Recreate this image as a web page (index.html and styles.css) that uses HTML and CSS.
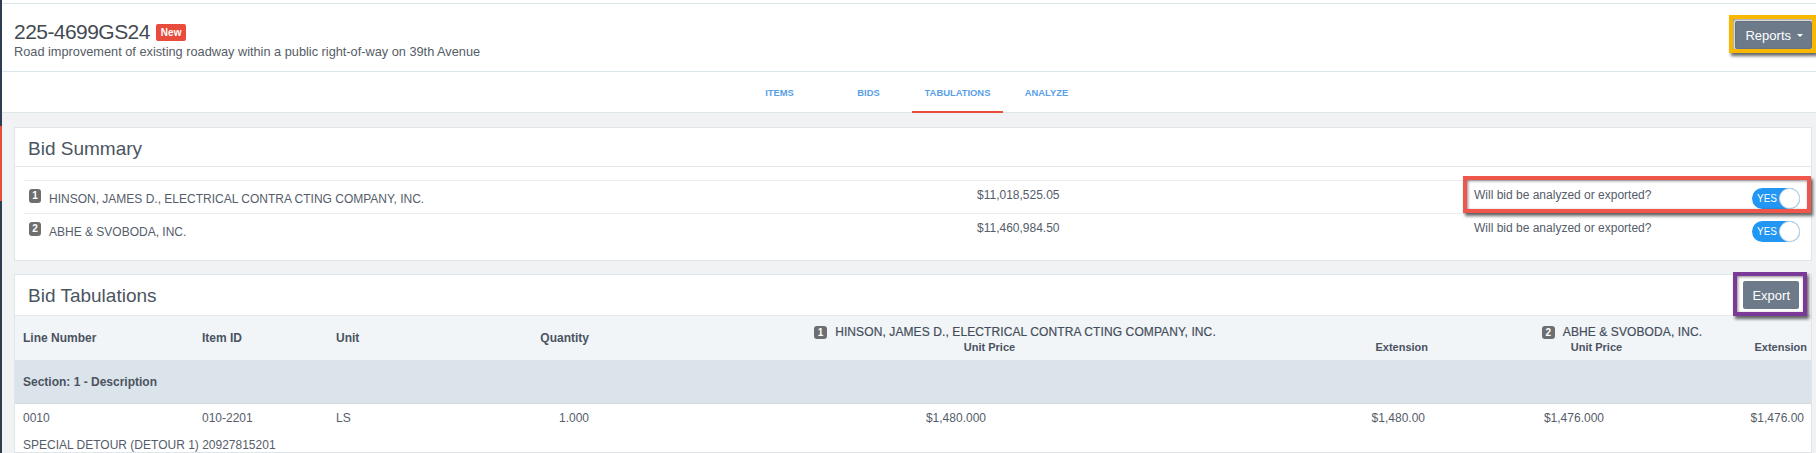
FILE: index.html
```html
<!DOCTYPE html>
<html lang="en">
<head>
<meta charset="utf-8">
<title>225-4699GS24 – Tabulations</title>
<link rel="stylesheet" href="styles.css">
</head>
<body>
<div class="app">
  <aside class="rail"><div class="rail-active"></div></aside>
  <div class="page">
    <div class="topbar"></div>
    <header class="page-head">
      <div class="head-text">
        <h1 class="job-id"><span>225-4699GS24</span><span class="tag-new">New</span></h1>
        <p class="job-desc">Road improvement of existing roadway within a public right-of-way on 39th Avenue</p>
      </div>
      <div class="head-actions">
        <button class="btn btn-slate btn-reports">Reports <span class="caret"></span></button>
        <span class="mark mark-yellow"></span>
      </div>
    </header>
    <nav class="tabs">
      <a class="tab">ITEMS</a>
      <a class="tab">BIDS</a>
      <a class="tab tab-active">TABULATIONS</a>
      <a class="tab">ANALYZE</a>
    </nav>
    <main class="content">
      <section class="card">
        <div class="card-head"><h2 class="card-title">Bid Summary</h2></div>
        <div class="card-body">
          <div class="sum-row">
            <div class="sum-name"><span class="num">1</span><span>HINSON, JAMES D., ELECTRICAL CONTRA CTING COMPANY, INC.</span></div>
            <div class="sum-amount">$11,018,525.05</div>
            <div class="sum-q">
              <span class="q-text">Will bid be analyzed or exported?</span>
              <span class="toggle"><span class="toggle-label">YES</span><span class="toggle-knob"></span></span>
              <span class="mark mark-red"></span>
            </div>
          </div>
          <div class="sum-row">
            <div class="sum-name"><span class="num">2</span><span>ABHE &amp; SVOBODA, INC.</span></div>
            <div class="sum-amount">$11,460,984.50</div>
            <div class="sum-q">
              <span class="q-text">Will bid be analyzed or exported?</span>
              <span class="toggle"><span class="toggle-label">YES</span><span class="toggle-knob"></span></span>
            </div>
          </div>
        </div>
      </section>

      <section class="card">
        <div class="card-head card-head-flex">
          <h2 class="card-title">Bid Tabulations</h2>
          <div class="head-actions">
            <button class="btn btn-slate btn-export">Export</button>
            <span class="mark mark-purple"></span>
          </div>
        </div>
        <div class="tab-table">
          <div class="trow thead">
            <div class="th c1">Line Number</div>
            <div class="th c2">Item ID</div>
            <div class="th c3">Unit</div>
            <div class="th c4 right">Quantity</div>
            <div class="bidder b1">
              <div class="bidder-name"><span class="num num-sq">1</span><span>HINSON, JAMES D., ELECTRICAL CONTRA CTING COMPANY, INC.</span></div>
              <div class="sub-label">Unit Price</div>
            </div>
            <div class="ext-label e1">Extension</div>
            <div class="bidder b2">
              <div class="bidder-name"><span class="num num-sq">2</span><span>ABHE &amp; SVOBODA, INC.</span></div>
              <div class="sub-label">Unit Price</div>
            </div>
            <div class="ext-label e2">Extension</div>
          </div>
          <div class="section-row">Section: 1 - Description</div>
          <div class="trow tdata">
            <div class="td">0010</div>
            <div class="td">010-2201</div>
            <div class="td">LS</div>
            <div class="td right">1.000</div>
            <div class="td right">$1,480.000</div>
            <div class="td right">$1,480.00</div>
            <div class="td right">$1,476.000</div>
            <div class="td right last">$1,476.00</div>
            <div class="td desc">SPECIAL DETOUR (DETOUR 1) 20927815201</div>
          </div>
        </div>
      </section>
    </main>
  </div>
</div>
</body>
</html>
```
FILE: styles.css
```css
* { box-sizing: border-box; }

html, body {
  margin: 0;
  height: 453px;
  overflow: hidden;
}

body {
  font-family: "Liberation Sans", Arial, sans-serif;
  background: #f1f2f3;
  color: #555d6a;
}

.app {
  display: flex;
  height: 453px;
}

.rail {
  width: 2px;
  flex: none;
  background: #2c3e50;
}

.rail-active {
  margin-top: 126px;
  height: 75px;
  background: #e74c3c;
}

.page {
  flex: 1;
  min-width: 0;
  display: flex;
  flex-direction: column;
}

.topbar {
  height: 6px;
  background: #fff;
  border-bottom: 1px solid #dde6ea;
}

/* ---------- page header ---------- */
.page-head {
  display: flex;
  justify-content: space-between;
  align-items: flex-start;
  background: #fff;
  border-bottom: 1px solid #dde6ea;
  padding: 13px 4px 11px 12px;
}

.head-text {
  padding-top: 3px;
}

.job-id {
  display: flex;
  align-items: center;
  gap: 6px;
  margin: 0;
  font-size: 21px;
  line-height: 24px;
  letter-spacing: -0.55px;
  font-weight: normal;
  color: #434a53;
}

.tag-new {
  height: 17px;
  padding: 0 5px;
  border-radius: 2px;
  background: #e74c3c;
  color: #fff;
  font-size: 10px;
  font-weight: bold;
  line-height: 17px;
  letter-spacing: 0;
}

.job-desc {
  margin: 0;
  font-size: 12.75px;
  line-height: 16px;
  color: #555d66;
}

.head-actions {
  position: relative;
  display: flex;
}

.page-head .head-actions {
  padding-top: 4px;
}

.btn {
  font-family: "Liberation Sans", Arial, sans-serif;
  border: 0;
  cursor: pointer;
}

.btn-slate {
  display: flex;
  align-items: center;
  height: 28px;
  border-radius: 2px;
  background: #6c7a8a;
  color: #fff;
  font-size: 13px;
}

.btn-reports {
  padding: 0 9px 0 10px;
  gap: 6px;
}

.caret {
  width: 0;
  height: 0;
  border-left: 3px solid transparent;
  border-right: 3px solid transparent;
  border-top: 3px solid #fff;
}

.btn-export {
  padding: 0 9px;
}

/* annotation frames */
.mark {
  position: absolute;
  pointer-events: none;
  border: 4px solid;
  box-shadow: 2px 3px 3px rgba(0, 0, 0, 0.6), inset 1px 1px 3px rgba(0, 0, 0, 0.45);
}

.mark-yellow {
  border-color: #f8b800;
  left: -6px;
  top: -2px;
  right: -4px;
  bottom: -4px;
}

.mark-red {
  border-color: #f0564b;
  left: -11px;
  right: -11px;
  top: -5px;
  bottom: 0;
}

.mark-purple {
  border-color: #7b3a98;
  left: -10px;
  top: -9px;
  right: -8px;
  bottom: -7px;
}

/* ---------- tabs ---------- */
.tabs {
  display: flex;
  justify-content: center;
  height: 41px;
  padding: 0 4px 0 12px;
  background: #fff;
  border-bottom: 1px solid #dde6ea;
}

.tab {
  width: 89px;
  height: 41px;
  margin-bottom: -1px;
  display: flex;
  align-items: center;
  justify-content: center;
  font-size: 9.4px;
  font-weight: bold;
  color: #5a9fe6;
  text-decoration: none;
}

.tab-active {
  width: 91px;
  margin: 0 -1px -1px;
  border-bottom: 2px solid #e74c3c;
  padding-top: 2px;
}

/* ---------- content ---------- */
.content {
  display: flex;
  flex-direction: column;
  gap: 13px;
  padding: 14px 4px 0 12px;
}

.card {
  background: #fff;
  border: 1px solid #dfe5e9;
}

.card-head {
  padding: 10px 13px 7px;
  border-bottom: 1px solid #e3e9ed;
}

.card-title {
  margin: 0;
  font-size: 19px;
  line-height: 21px;
  font-weight: normal;
  color: #4b5561;
}

.card-head-flex {
  display: flex;
  justify-content: space-between;
  align-items: center;
  padding: 6px 12px 6px 13px;
  border-bottom: 0;
}

.card-body {
  padding: 13px 11px 14px 9px;
}

/* bid summary rows */
.sum-row {
  display: grid;
  grid-template-columns: 953px 497px 1fr;
  height: 33px;
  border-top: 1px solid #e8ecef;
  font-size: 12px;
  line-height: 16px;
}

.sum-name {
  display: flex;
  align-items: center;
  gap: 8px;
  align-self: start;
  padding: 8px 0 0 5px;
}

.num {
  display: inline-block;
  width: 12px;
  height: 14px;
  margin-bottom: 5px;
  border-radius: 3px;
  background: #6d6e70;
  color: #fff;
  font-size: 10px;
  font-weight: bold;
  line-height: 14px;
  text-align: center;
}

.sum-amount {
  padding-top: 6px;
  font-size: 12px;
}

.sum-q {
  position: relative;
  display: flex;
  justify-content: space-between;
  align-items: flex-start;
}

.q-text {
  padding-top: 6px;
}

.toggle {
  display: flex;
  align-items: center;
  width: 48px;
  height: 21px;
  margin-top: 7px;
  border-radius: 11px;
  background: #2196f3;
}

.toggle-label {
  flex: 1;
  padding-left: 3px;
  text-align: center;
  color: #fff;
  font-size: 10px;
  line-height: 21px;
}

.toggle-knob {
  width: 21px;
  height: 21px;
  border-radius: 50%;
  background: #fff;
  border: 1px solid #cfd6dc;
}

/* bid tabulation table */
.trow {
  display: grid;
  grid-template-columns: 179px 134px 112px 157px 397px 439px 179px 1fr;
}

.thead {
  grid-template-rows: 44px;
  background: #f1f5f8;
  border-top: 1px solid #e3e9ee;
}

.th {
  grid-row: 1;
  align-self: center;
  padding: 0 8px;
  font-size: 12px;
  font-weight: bold;
  line-height: 15px;
  color: #4b5361;
}

.c1 { grid-column: 1; }
.c2 { grid-column: 2; }
.c3 { grid-column: 3; }
.c4 { grid-column: 4; }

.right { text-align: right; }

.bidder {
  grid-row: 1;
  align-self: start;
  padding-top: 9px;
  text-align: center;
}

.b1 { grid-column: 5 / span 2; }
.b2 { grid-column: 7 / span 2; }

.bidder-name {
  display: flex;
  justify-content: center;
  align-items: center;
  gap: 8px;
  font-size: 12px;
  line-height: 15px;
  letter-spacing: 0.1px;
  color: #454d5a;
  -webkit-text-stroke: 0.2px #454d5a;
}

.num-sq {
  width: 13px;
  height: 13px;
  margin-bottom: 0;
  border-radius: 3px;
  line-height: 13px;
  -webkit-text-stroke: 0;
}

.sub-label {
  margin-right: 51px;
  font-size: 11px;
  font-weight: bold;
  line-height: 15px;
  color: #4b5361;
}

.ext-label {
  grid-row: 1;
  align-self: start;
  padding-top: 24px;
  text-align: right;
  font-size: 11px;
  font-weight: bold;
  line-height: 15px;
  color: #4b5361;
}

.e1 { grid-column: 6; padding-right: 5px; }
.e2 { grid-column: 8; padding-right: 4px; }

.section-row {
  height: 44px;
  padding-left: 8px;
  display: flex;
  align-items: center;
  background: #dbe4ea;
  border-bottom: 1px solid #d0dae1;
  font-size: 12px;
  font-weight: bold;
  color: #4b5361;
}

.tdata {
  font-size: 12px;
  line-height: 14px;
}

.td {
  padding: 7px 8px;
}

.td.last {
  padding-right: 7px;
}

.td.desc {
  grid-column: 1 / -1;
  padding-top: 0;
  padding-bottom: 0;
  margin-top: 6px;
}
```
